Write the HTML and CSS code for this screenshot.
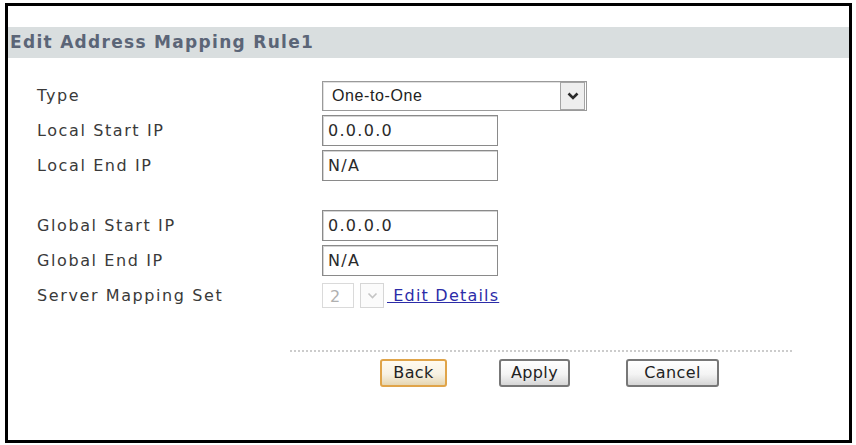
FILE: index.html
```html
<!DOCTYPE html>
<html lang="en">
<head>
	<meta charset="UTF-8">
	<title>Edit Address Mapping Rule</title>
	<link rel="stylesheet" href="styles.css">
</head>
<body>
	<div class="frame">
		<div class="title">Edit Address Mapping Rule1</div>
		<div class="form">
			<div class="label">Type</div>
			<div class="field">
				<div class="select wide"><span class="val">One-to-One</span><span class="arrow"><svg width="12" height="8" viewBox="0 0 12 8"><path d="M1.5 1.5 L6 6 L10.5 1.5" fill="none" stroke="#2a2a2a" stroke-width="2.6"/></svg></span></div>
			</div>
			<div class="label">Local Start IP</div>
			<div class="field"><div class="input">0.0.0.0</div></div>
			<div class="label">Local End IP</div>
			<div class="field"><div class="input">N/A</div></div>
			<div class="spacer"></div>
			<div class="label">Global Start IP</div>
			<div class="field"><div class="input">0.0.0.0</div></div>
			<div class="label">Global End IP</div>
			<div class="field"><div class="input">N/A</div></div>
			<div class="label">Server Mapping Set</div>
			<div class="field">
				<div class="select small disabled"><span class="val">2</span><span class="arrow"><svg width="11" height="8" viewBox="0 0 11 8"><path d="M1.5 1.5 L5.5 5.5 L9.5 1.5" fill="none" stroke="#c4c4c4" stroke-width="1.6"/></svg></span></div>
				<a class="link" href="#">&nbsp;Edit Details</a>
			</div>
		</div>
		<div class="actions">
			<div class="line"></div>
			<div class="buttons">
				<span class="btn back">Back</span>
				<span class="btn apply">Apply</span>
				<span class="btn cancel">Cancel</span>
			</div>
		</div>
	</div>
</body>
</html>
```

FILE: styles.css
```css
body{margin:0;background:#fff;font-family:"DejaVu Sans",Verdana,sans-serif;color:#333;}
.frame{margin:3px 0 0 5px;width:841px;height:434px;border:3px solid #000;}
.title{margin-top:21px;height:31px;line-height:31px;padding-left:2px;background-color:#d9dedf;color:#5b6577;font-size:17px;font-weight:bold;letter-spacing:1.3px;}

.form{display:grid;grid-template-columns:285px auto;row-gap:4px;margin-top:22px;padding-left:29px;}
.label{height:31px;line-height:31px;font-size:16px;letter-spacing:1.6px;color:#3a3a3a;}
.field{display:flex;align-items:center;height:31px;}
.spacer{grid-column:1 / 3;height:21px;}

.input{box-sizing:border-box;width:176px;height:31px;line-height:29px;padding-left:5px;border:1px solid #8a8a8a;box-shadow:inset 1px 1px 0 #d4d4d4;font-size:16px;letter-spacing:1.3px;color:#2a2a2a;}

.select{box-sizing:border-box;display:flex;align-items:center;height:30px;border:1px solid #9a9a9a;box-shadow:inset 1px 1px 0 #e0e0e0;color:#222;}
.select.wide{width:265px;}
.select .val{flex:1;padding-left:9px;font-family:"Liberation Sans",Arial,sans-serif;font-size:16px;letter-spacing:0.6px;}
.select .arrow{display:flex;align-items:center;justify-content:center;width:23px;height:26px;margin-right:1px;border:1px solid #a4a4a4;background:#eeeeee;}
.select.small{width:63px;height:25px;border:none;box-shadow:none;}
.select.small .val{box-sizing:border-box;flex:none;width:32px;height:25px;line-height:25px;padding-left:7px;border:1px solid #dadada;font-family:"DejaVu Sans",Verdana,sans-serif;color:#b0b0b0;}
.select.small .arrow{width:22px;height:23px;margin-left:6px;margin-right:0;border-color:#d6d6d6;background:#fbfbfb;}

.link{margin-left:2px;color:#2c2ca8;font-size:16px;letter-spacing:1.2px;text-decoration:underline;}

.actions{margin-top:39px;margin-left:282px;width:502px;}
.line{border-top:2px dotted #cccccc;}
.buttons{display:flex;margin-top:7px;margin-left:90px;}
.btn{box-sizing:border-box;display:inline-block;height:28px;line-height:24px;text-align:center;font-size:16px;letter-spacing:0.4px;color:#222;border:2px solid #777;border-radius:3px;background:linear-gradient(#ffffff,#f4f4f4 55%,#d6d6d6);}
.back{width:67px;border-color:#e0a449;background:linear-gradient(#fffaf0,#f7f1e3 55%,#e6d6b2);}
.apply{width:71px;margin-left:52px;}
.cancel{width:93px;margin-left:56px;}
```
